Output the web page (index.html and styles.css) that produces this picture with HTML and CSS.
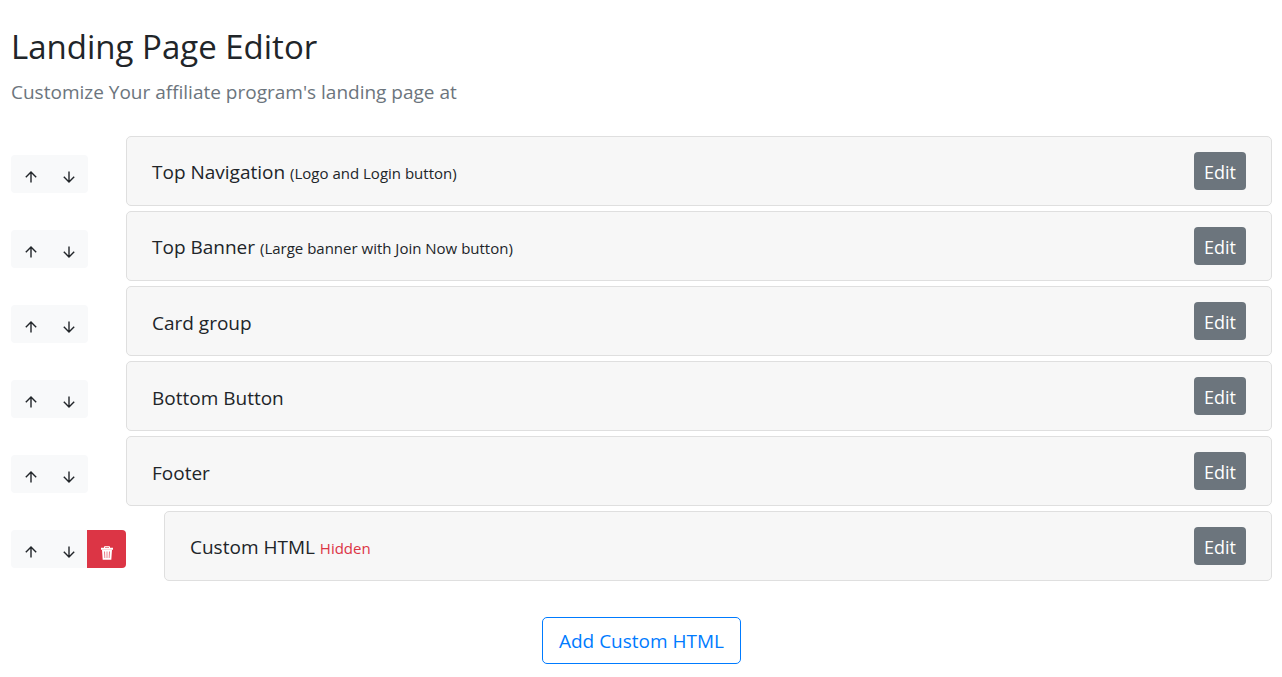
FILE: index.html
```html
<!DOCTYPE html>
<html lang="en">
<head>
<meta charset="utf-8">
<meta name="viewport" content="width=device-width, initial-scale=1">
<title>Landing Page Editor</title>
<link rel="stylesheet" href="styles.css">
</head>
<body>
<svg class="sprite" aria-hidden="true">
  <symbol id="up" viewBox="0 0 12 12"><path d="M6 11.500V1.200M.8 6.200 6 1l5.200 5.200" fill="none" stroke="currentColor" stroke-width="1.400"/></symbol>
  <symbol id="down" viewBox="0 0 12 12"><path d="M6 .5v10.300M.8 5.800 6 11l5.200-5.200" fill="none" stroke="currentColor" stroke-width="1.400"/></symbol>
  <symbol id="trash" viewBox="0 0 14 14"><path d="M4.500 2V.7h5V2" fill="none" stroke="currentColor"/><path d="M1 1.800h12v2H1z" fill="currentColor"/><path fill-rule="evenodd" d="M2 3.800h10l-.7 10H2.700zM4.300 5.500l.3 6.500h.6L5 5.500zm2.400 0V12h.6V5.500zm2.300 0L8.800 12h.6l.3-6.500z" fill="currentColor"/></symbol>
</svg>
<main class="page">
  <header class="intro">
    <h1 class="title">Landing Page Editor</h1>
    <p class="lead">Customize Your affiliate program's landing page at</p>
  </header>
  <ul class="sections">
    <li class="row">
      <div class="tools"><button class="tool" aria-label="Move up"><svg class="icon"><use href="#up"/></svg></button><button class="tool" aria-label="Move down"><svg class="icon"><use href="#down"/></svg></button></div>
      <div class="card"><h2 class="name">Top Navigation <small class="note">(Logo and Login button)</small></h2><button class="edit">Edit</button></div>
    </li>
    <li class="row">
      <div class="tools"><button class="tool" aria-label="Move up"><svg class="icon"><use href="#up"/></svg></button><button class="tool" aria-label="Move down"><svg class="icon"><use href="#down"/></svg></button></div>
      <div class="card"><h2 class="name">Top Banner <small class="note">(Large banner with Join Now button)</small></h2><button class="edit">Edit</button></div>
    </li>
    <li class="row">
      <div class="tools"><button class="tool" aria-label="Move up"><svg class="icon"><use href="#up"/></svg></button><button class="tool" aria-label="Move down"><svg class="icon"><use href="#down"/></svg></button></div>
      <div class="card"><h2 class="name">Card group</h2><button class="edit">Edit</button></div>
    </li>
    <li class="row">
      <div class="tools"><button class="tool" aria-label="Move up"><svg class="icon"><use href="#up"/></svg></button><button class="tool" aria-label="Move down"><svg class="icon"><use href="#down"/></svg></button></div>
      <div class="card"><h2 class="name">Bottom Button</h2><button class="edit">Edit</button></div>
    </li>
    <li class="row">
      <div class="tools"><button class="tool" aria-label="Move up"><svg class="icon"><use href="#up"/></svg></button><button class="tool" aria-label="Move down"><svg class="icon"><use href="#down"/></svg></button></div>
      <div class="card"><h2 class="name">Footer</h2><button class="edit">Edit</button></div>
    </li>
    <li class="row">
      <div class="tools"><button class="tool" aria-label="Move up"><svg class="icon"><use href="#up"/></svg></button><button class="tool" aria-label="Move down"><svg class="icon"><use href="#down"/></svg></button><button class="tool tool-delete" aria-label="Delete"><svg class="icon icon-trash"><use href="#trash"/></svg></button></div>
      <div class="card"><h2 class="name">Custom HTML <small class="note note-hidden">Hidden</small></h2><button class="edit">Edit</button></div>
    </li>
  </ul>
  <button class="add">Add Custom HTML</button>
</main>
</body>
</html>
```

FILE: styles.css
```css
* { box-sizing: border-box; }
body {
  margin: 0;
  background: #fff;
  color: #212529;
  font-family: "Segoe UI", "Open Sans", "Noto Sans", sans-serif;
}
button { font-family: inherit; cursor: pointer; }
.sprite { display: none; }
.page {
  display: flex;
  flex-direction: column;
  padding: 26px 10px 13px 11px;
}
.title { margin: 0; font-size: 33px; font-weight: 400; line-height: 42px; }
.lead { margin: 10px 0 0; color: #6c757d; font-size: 19px; line-height: 28px; }
.sections {
  display: flex;
  flex-direction: column;
  gap: 5px;
  margin: 30px 0 0;
  padding: 0;
  list-style: none;
}
.row { display: flex; align-items: center; gap: 38px; }
.tools {
  display: flex;
  margin-top: 5px;
  border-radius: 4px;
  overflow: hidden;
}
.tool {
  display: flex;
  justify-content: center;
  width: 39px;
  height: 38px;
  padding: 16px 0 0;
  border: 0;
  background: #f8f9fa;
  color: #212529;
}
.tool + .tool { margin-left: -1px; }
.tool-delete { background: #dc3545; color: #fff; }
.icon { width: 12px; height: 12px; }
.icon-trash { width: 14px; height: 14px; }
.card {
  display: flex;
  flex: 1;
  align-items: center;
  justify-content: space-between;
  padding: 15px 25px;
  border: 1px solid #dfdfdf;
  border-radius: 5px;
  background: #f7f7f7;
}
.name { margin: 0; padding-top: 3px; font-size: 19px; font-weight: 400; line-height: 28px; }
.note { font-size: 15px; }
.note-hidden { color: #dc3545; }
.edit {
  padding: 6px 10px 4px;
  border: 0;
  border-radius: 4px;
  background: #6c757d;
  color: #fff;
  font-size: 18px;
  line-height: 28px;
}
.add {
  align-self: center;
  margin-top: 36px;
  padding: 9px 16px 7px;
  border: 1px solid #007bff;
  border-radius: 5px;
  background: #fff;
  color: #007bff;
  font-size: 19px;
  line-height: 29px;
}
```
